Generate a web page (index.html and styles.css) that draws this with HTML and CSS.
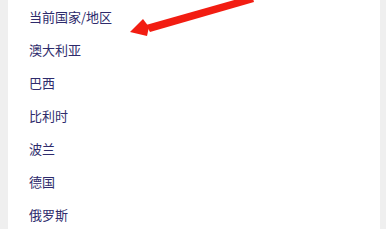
FILE: index.html
```html
<!DOCTYPE html>
<html lang="zh-CN">
<head>
    <meta charset="UTF-8">
    <meta name="viewport" content="width=device-width, initial-scale=1.0">
    <title>国家/地区</title>
    <link rel="stylesheet" href="styles.css">
</head>
<body>
    <section class="panel">
        <ul class="country-list">
            <li>当前国家/地区</li>
            <li>澳大利亚</li>
            <li>巴西</li>
            <li>比利时</li>
            <li>波兰</li>
            <li>德国</li>
            <li>俄罗斯</li>
        </ul>
        <!-- 标注箭头 -->
        <svg class="arrow" width="386" height="60" viewBox="0 0 386 60">
            <polygon points="252,-5 254,2 150,32 146,25" fill="#f21d12"/>
            <polygon points="130,32 143,19 149,27 147,36" fill="#f21d12"/>
        </svg>
    </section>
</body>
</html>
```

FILE: styles.css
```css
html, body {height: 100%;}
body {
    margin: 0; background: #efefef;
    font-family: "Noto Sans CJK SC", "Noto Sans", sans-serif;
    overflow: hidden;
}
.panel {
    position: relative;
    background: #fff; margin: 0 6px 0 8px; height: 100%;
}
.country-list {list-style: none; margin: 0; padding: 0;}
.country-list li {
    height: 33px; line-height: 33px;
    padding-left: 21px;
    font-size: 13px; color: #2e2b6c;
}
.arrow {position: absolute; left: -8px; top: 0;}
```
